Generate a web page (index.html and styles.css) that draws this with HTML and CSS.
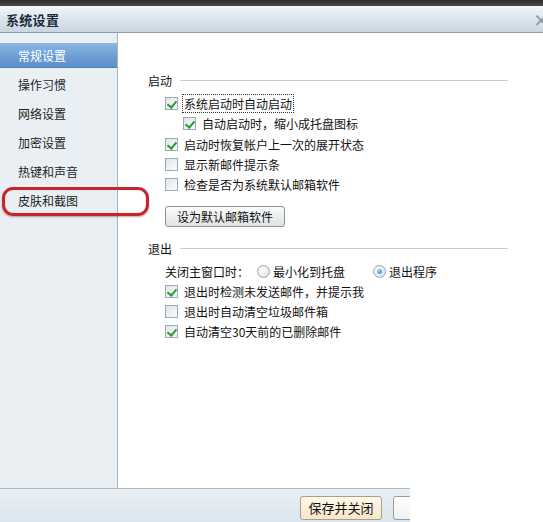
FILE: index.html
```html
<!DOCTYPE html>
<html lang="zh-CN">
<head>
<meta charset="utf-8">
<title>系统设置</title>
<link rel="stylesheet" href="styles.css">
</head>
<body>
<div class="window">
  <div class="topstrip"></div>
  <div class="titlebar">
    <span class="title">系统设置</span>
    <span class="close">×</span>
  </div>
  <div class="main">
    <ul class="sidebar">
      <li class="nav active">常规设置</li>
      <li class="nav">操作习惯</li>
      <li class="nav">网络设置</li>
      <li class="nav">加密设置</li>
      <li class="nav">热键和声音</li>
      <li class="nav marked">皮肤和截图<span class="ring"></span></li>
    </ul>
    <div class="content">
      <div class="group-head"><span>启动</span><span class="rule"></span></div>
      <div class="opts">
        <div class="row"><span class="cb on"></span><span class="focus">系统启动时自动启动</span></div>
        <div class="row sub"><span class="cb on"></span><span>自动启动时，缩小成托盘图标</span></div>
        <div class="row"><span class="cb on"></span><span>启动时恢复帐户上一次的展开状态</span></div>
        <div class="row"><span class="cb"></span><span>显示新邮件提示条</span></div>
        <div class="row"><span class="cb"></span><span>检查是否为系统默认邮箱软件</span></div>
        <div class="btnrow"><button class="btn">设为默认邮箱软件</button></div>
      </div>
      <div class="group-head"><span>退出</span><span class="rule"></span></div>
      <div class="opts">
        <div class="row radios">
          <span class="lbl">关闭主窗口时：</span>
          <span class="ropt"><span class="rb"></span>最小化到托盘</span>
          <span class="ropt"><span class="rb on"></span>退出程序</span>
        </div>
        <div class="row"><span class="cb on"></span><span>退出时检测未发送邮件，并提示我</span></div>
        <div class="row"><span class="cb"></span><span>退出时自动清空垃圾邮件箱</span></div>
        <div class="row"><span class="cb on"></span><span>自动清空30天前的已删除邮件</span></div>
      </div>
    </div>
  </div>
  <div class="footer">
    <div class="footbar">
      <button class="fbtn primary">保存并关闭</button>
      <button class="fbtn">取消</button>
    </div>
    <div class="footrest"></div>
  </div>
</div>
</body>
</html>
```
FILE: styles.css
```css
* { box-sizing: border-box; }
html, body { margin: 0; padding: 0; background: #fff; }
body {
  font-family: "Noto Sans CJK SC", "Noto Sans", sans-serif;
  font-size: 12px;
  color: #111;
  width: 543px;
  height: 522px;
  overflow: hidden;
}
.window { display: flex; flex-direction: column; height: 522px; }
.topstrip { height: 6px; background: linear-gradient(#2c2c2c, #4a4a4a); }
.titlebar {
  height: 27px;
  display: flex;
  align-items: center;
  justify-content: space-between;
  padding-left: 6px;
  background: linear-gradient(#f3f6f9, #d9e3eb 55%, #c9d5df);
  border-bottom: 1px solid #8e9daa;
  overflow: hidden;
}
.title { font-size: 13px; font-weight: bold; color: #1c2b3a; letter-spacing: 0.3px; }
.close { color: #8a95a0; font-size: 16px; font-weight: bold; margin-right: -6px; }
.main { flex: 1; display: flex; min-height: 0; }
.sidebar {
  list-style: none;
  margin: 0;
  padding: 10px 0 0;
  width: 118px;
  background: #e9eff3;
  border-right: 1px solid #a6b5bd;
  display: flex;
  flex-direction: column;
  gap: 4px;
}
.nav {
  height: 25px;
  line-height: 25px;
  padding-left: 18px;
  color: #1e1e1e;
  position: relative;
}
.nav.active {
  background: linear-gradient(#8cb6e2, #6b9dd3 60%, #5e90c8);
  color: #fff;
  border-bottom: 1px solid #4f7fb6;
}
.ring {
  position: absolute;
  left: -16px;
  top: -1px;
  width: 147px;
  height: 29px;
  left: 2px;
  border: 3px solid #c4262c;
  border-radius: 11px;
  box-shadow: 0 1px 2px rgba(80, 0, 0, 0.35), inset 0 0 1px rgba(120,0,0,0.4);
  z-index: 2;
}
.content {
  flex: 1;
  background: #fff;
  padding: 37px 35px 0 30px;
}
.group-head {
  display: flex;
  align-items: center;
  height: 20px;
  gap: 8px;
}
.rule { flex: 1; border-top: 1px solid #c6ced6; }
.opts { padding-left: 17px; padding-top: 3px; padding-bottom: 11px; }
.row {
  display: flex;
  align-items: center;
  height: 20px;
  gap: 6px;
  white-space: nowrap;
}
.row.sub { padding-left: 18px; height: 21px; }
.cb {
  width: 13px;
  height: 13px;
  flex: none;
  border: 1px solid #9aaab8;
  background: linear-gradient(135deg, #dfe5ea, #fbfcfd);
  position: relative;
}
.cb.on::after {
  content: "";
  position: absolute;
  left: 3px;
  top: 1px;
  width: 4px;
  height: 7px;
  border-right: 2px solid #2f9b33;
  border-bottom: 2px solid #2f9b33;
  transform: rotate(40deg);
}
.focus { outline: 1px dotted #333; outline-offset: 0; padding: 0 1px; margin-left: -1px; }
.btnrow { padding-top: 12px; }
.btn {
  font: inherit;
  color: #111;
  height: 21px;
  padding: 0 11px;
  border: 1px solid #8c9298;
  border-radius: 3px;
  background: linear-gradient(#fdfdfd, #eceeef 50%, #dfe2e4);
}
.radios { gap: 0; }
.lbl { width: 92px; }
.ropt { display: flex; align-items: center; gap: 3px; width: 116px; }
.rb {
  width: 13px; height: 13px;
  border-radius: 50%;
  border: 1px solid #9aa5ae;
  background: radial-gradient(circle at 40% 40%, #fdfdfd, #d8dde1);
  position: relative;
}
.rb.on::after {
  content: "";
  position: absolute;
  left: 3px; top: 3px;
  width: 5px; height: 5px;
  border-radius: 50%;
  background: radial-gradient(circle at 35% 35%, #9fd0ff, #2a7fd4);
}
.footer { height: 34px; display: flex; }
.footbar {
  width: 410px;
  background: linear-gradient(#eaf0f4, #dae5ed);
  border-top: 1px solid #aebcc6;
  display: flex;
  align-items: center;
  gap: 11px;
  padding-left: 300px;
  overflow: hidden;
}
.footrest { flex: 1; background: #fff; }
.fbtn {
  font: inherit;
  font-size: 13px;
  flex: none;
  width: 82px;
  height: 24px;
  margin-top: 4px;
  border: 1px solid #9b9c98;
  border-radius: 3px;
  color: #111;
  background: linear-gradient(#fff, #eef0f1);
}
.fbtn.primary { background: linear-gradient(#fff8ea, #f8e7c7); border-color: #a8a08c; }
```
